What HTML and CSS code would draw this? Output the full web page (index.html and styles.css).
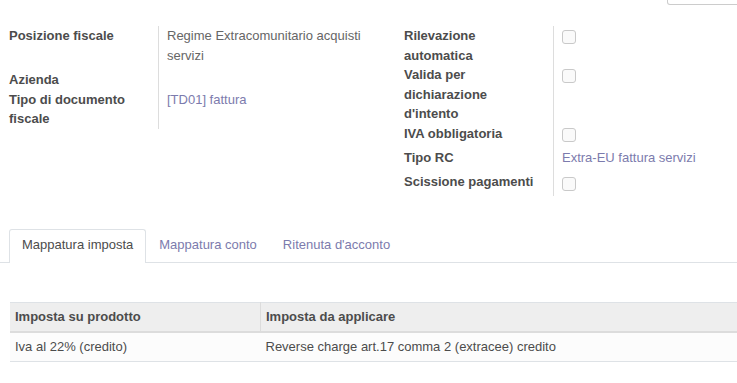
FILE: index.html
```html
<!DOCTYPE html>
<html lang="it">
  <head>
    <meta charset="UTF-8" />
    <meta name="viewport" content="width=device-width, initial-scale=1.0" />
    <title>Posizione fiscale</title>
    <link rel="stylesheet" href="styles.css">
  </head>
  <body>
    <div class="topbar">
      <div class="topbar-btn"></div>
    </div>

    <div class="groups">
      <div class="group group-left">
        <div class="label">Posizione fiscale</div>
        <div class="value">Regime Extracomunitario acquisti servizi</div>

        <div class="label label-low">Azienda</div>
        <div class="value row-24"></div>

        <div class="label">Tipo di documento fiscale</div>
        <div class="value"><a class="link" href="#">[TD01] fattura</a></div>
      </div>

      <div class="group group-right">
        <div class="label">Rilevazione automatica</div>
        <div class="value"><span class="checkbox"></span></div>

        <div class="label">Valida per dichiarazione d'intento</div>
        <div class="value"><span class="checkbox"></span></div>

        <div class="label">IVA obbligatoria</div>
        <div class="value row-24"><span class="checkbox"></span></div>

        <div class="label">Tipo RC</div>
        <div class="value row-24"><a class="link" href="#">Extra-EU fattura servizi</a></div>

        <div class="label">Scissione pagamenti</div>
        <div class="value row-24"><span class="checkbox checkbox-low"></span></div>
      </div>
    </div>

    <ul class="tabs">
      <li class="tab active">Mappatura imposta</li>
      <li class="tab">Mappatura conto</li>
      <li class="tab">Ritenuta d'acconto</li>
    </ul>

    <table class="list">
      <thead>
        <tr>
          <th class="col-1">Imposta su prodotto</th>
          <th>Imposta da applicare</th>
        </tr>
      </thead>
      <tbody>
        <tr>
          <td>Iva al 22% (credito)</td>
          <td>Reverse charge art.17 comma 2 (extracee) credito</td>
        </tr>
      </tbody>
    </table>
  </body>
</html>
```

FILE: styles.css
```css
body {
  margin: 0;
  padding: 0;
  overflow: hidden;
  font-family: "Liberation Sans", Arial, sans-serif;
  font-size: 13px;
  line-height: 1.5;
  color: #4c4c4c;
  background: #fff;
}

.topbar {
  display: flex;
  justify-content: flex-end;
  height: 5px;
}
.topbar-btn {
  width: 75px;
  height: 4px;
  margin-right: -7px;
  border: 1px solid #cccccc;
  border-top: none;
  border-radius: 0 0 3px 3px;
}

.groups {
  display: flex;
  align-items: flex-start;
  margin-top: 21px;
  padding-left: 9px;
}
.group {
  display: grid;
  grid-template-columns: 149px 1fr;
}
.group-left {
  width: 395px;
  flex: none;
}
.group-right {
  flex: 1;
}

.label {
  font-weight: bold;
  padding-right: 15px;
  color: #4c4c4c;
}
.label-low {
  padding-top: 5px;
}
.value {
  border-left: 1px solid #dddddd;
  padding-left: 8px;
  padding-right: 16px;
  color: #666666;
}
.row-24 {
  min-height: 24px;
}

.link {
  color: #7c7bad;
  text-decoration: none;
}

.checkbox {
  display: block;
  width: 12px;
  height: 12px;
  margin-top: 4px;
  border: 1px solid #c9c9c9;
  border-radius: 3px;
  background: #fafafa;
}
.checkbox-low {
  margin-top: 5px;
}

.tabs {
  display: flex;
  list-style: none;
  margin: 33px 0 0 0;
  padding: 0 0 0 9px;
  border-bottom: 1px solid #dee2e6;
}
.tab {
  padding: 5px 12px 7px;
  line-height: 20px;
  border: 1px solid transparent;
  border-bottom: none;
  color: #7c7bad;
}
.tab.active {
  color: #4c4c4c;
  background: #fff;
  border-color: #dee2e6;
  border-radius: 3px 3px 0 0;
  margin-bottom: -1px;
  padding-bottom: 8px;
}

.list {
  width: 740px;
  margin: 39px 0 0 10px;
  border-collapse: collapse;
  table-layout: fixed;
}
.list th,
.list td {
  text-align: left;
  padding: 4px 5px;
  line-height: 20px;
  white-space: nowrap;
}
.list th {
  background: #eeeeee;
  font-weight: bold;
  color: #4c4c4c;
  border-top: 1px solid #dee2e6;
  border-bottom: 2px solid #dcdcdc;
}
.list th.col-1 {
  width: 240px;
  border-right: 1px solid #dcdcdc;
}
.list td {
  background: #fcfcfc;
  color: #4c4c4c;
  border-bottom: 1px solid #dee2e6;
}
```
